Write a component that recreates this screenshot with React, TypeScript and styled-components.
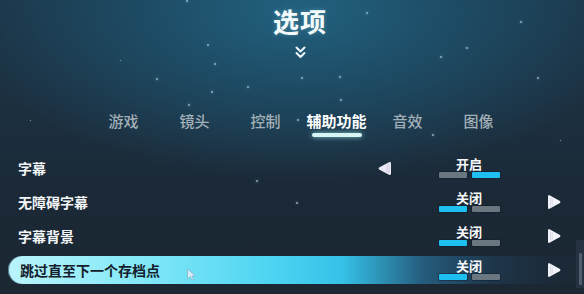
import styled, { createGlobalStyle } from 'styled-components';

const GlobalStyle = createGlobalStyle`
  html, body {
    margin: 0;
    padding: 0;
    background: #1b2835;
  }
  body {
    font-family: 'Noto Sans CJK SC', 'Noto Sans', sans-serif;
  }
`;

const Screen = styled.div`
  position: relative;
  width: 584px;
  height: 294px;
  overflow: hidden;
  display: flex;
  flex-direction: column;
  align-items: stretch;
  background:
    radial-gradient(ellipse 340px 170px at 300px 10px, #22617f 0%, #1e4e68 40%, rgba(28, 52, 70, 0) 100%),
    linear-gradient(180deg, #1c3446 0%, #1c2e3e 45%, #1b2835 70%, #1b2834 100%);
`;

const Star = styled.span<{ $size: number }>`
  position: absolute;
  width: ${p => p.$size}px;
  height: ${p => p.$size}px;
  border-radius: 50%;
  background: rgba(190, 225, 240, 0.7);
  box-shadow: 0 0 3px rgba(170, 220, 240, 0.6);
`;

const Header = styled.header`
  display: flex;
  flex-direction: column;
  align-items: center;
  padding: 6px 0 0 16px;
`;

const Title = styled.h1`
  margin: 0;
  font-size: 26px;
  line-height: 30px;
  font-weight: 700;
  color: #f4fafc;
  letter-spacing: 1px;
  text-shadow: 0 0 4px rgba(140, 210, 230, 0.4);
`;

const Chevron = styled.svg`
  margin-top: 10px;
  display: block;
`;

const Tabs = styled.nav`
  display: flex;
  margin-top: 51px;
  padding-left: 88px;
`;

const Tab = styled.div<{ $active?: boolean }>`
  width: 71px;
  display: flex;
  flex-direction: column;
  align-items: center;
  font-size: 15px;
  line-height: 20px;
  font-weight: ${p => (p.$active ? 700 : 500)};
  color: ${p => (p.$active ? '#ffffff' : '#a3b0b8')};
  white-space: nowrap;
`;

const Underline = styled.span<{ $show?: boolean }>`
  margin-top: 2px;
  width: 50px;
  height: 4px;
  border-radius: 2px;
  background: ${p => (p.$show ? '#d9f5f3' : 'transparent')};
  box-shadow: ${p => (p.$show ? '0 0 5px rgba(160, 235, 235, 0.8)' : 'none')};
`;

const List = styled.div`
  display: flex;
  flex-direction: column;
  gap: 6px;
  margin-top: 17px;
  padding-left: 8px;
`;

const Row = styled.div<{ $focused?: boolean }>`
  display: grid;
  grid-template-columns: 1fr 30px 138px 30px;
  align-items: center;
  height: 28px;
  padding: 0 16px 0 10px;
  border-radius: 14px 0 0 14px;
  background: ${p =>
    p.$focused
      ? 'linear-gradient(90deg, #b9f4fb 0%, #86e9f8 22%, #4fd5f2 45%, #35c2e8 58%, rgba(40, 110, 150, 0.75) 72%, rgba(34, 70, 100, 0.45) 84%, rgba(30, 50, 75, 0.2) 94%, rgba(30, 50, 75, 0) 100%)'
      : 'transparent'};
  box-shadow: ${p => (p.$focused ? 'inset 1px 0 0 rgba(20, 40, 70, 0.6)' : 'none')};
`;

const Label = styled.span<{ $focused?: boolean }>`
  font-size: 14px;
  font-weight: 700;
  color: ${p => (p.$focused ? '#13202c' : '#f3f6f8')};
  padding-left: ${p => (p.$focused ? '2px' : '0')};
  white-space: nowrap;
`;

const ArrowCell = styled.div`
  display: flex;
  justify-content: center;
  align-items: center;
`;

const Value = styled.div`
  display: flex;
  flex-direction: column;
  align-items: center;
  gap: 1px;
  margin-top: -1px;
`;

const ValueText = styled.span`
  font-size: 13px;
  line-height: 14px;
  font-weight: 700;
  color: #f6f8fa;
`;

const Bars = styled.div`
  display: flex;
  gap: 5px;
`;

const Bar = styled.span<{ $on: boolean }>`
  width: 28px;
  height: 6px;
  border-radius: 1px;
  background: ${p => (p.$on ? '#1ec0f2' : '#6a7680')};
  box-shadow: 0 0 0 1px rgba(15, 30, 45, 0.5);
`;

const Scroll = styled.div`
  position: absolute;
  right: 0;
  top: 240px;
  width: 8px;
  height: 48px;
  background: #263240;
  display: flex;
  justify-content: center;
  padding-top: 13px;
  box-sizing: border-box;
`;

const Thumb = styled.span`
  width: 3px;
  height: 32px;
  background: #51606e;
  border-radius: 1px;
`;

const Cursor = styled.svg`
  position: absolute;
  left: 186px;
  top: 268px;
`;

const stars: [number, number, number][] = [
  [186, 0, 2], [207, 44, 2], [214, 63, 2], [156, 78, 2], [211, 91, 2], [247, 86, 2],
  [301, 77, 2], [339, 76, 2], [340, 99, 2], [366, 12, 2], [440, 56, 2], [466, 47, 2],
  [520, 21, 2], [537, 77, 2], [188, 104, 2], [297, 119, 2], [432, 134, 2], [256, 180, 2],
  [296, 202, 2], [30, 120, 1], [560, 140, 1], [120, 60, 1],
];

const LeftArrow = () => (
  <svg width="16" height="15" viewBox="0 0 16 15">
    <path d="M2.5 6.3 L12 1.2 Q14 0.3 14 2.4 L14 12.6 Q14 14.7 12 13.8 L2.5 8.7 Q0.6 7.5 2.5 6.3 Z" fill="#eceaf6" />
    <path d="M10 3.5 L10 11.5 M12 2.6 L12 12.4" stroke="#c9c6dc" strokeWidth="0.8" />
  </svg>
);

const RightArrow = () => (
  <svg width="17" height="16" viewBox="0 0 17 16">
    <path d="M14.5 6.7 L5 1.4 Q3 0.4 3 2.6 L3 13.4 Q3 15.6 5 14.6 L14.5 9.3 Q16.4 8 14.5 6.7 Z" fill="#f2f4fa" />
    <path d="M5.5 3.5 L5.5 12.5 M7.2 4.3 L7.2 11.7" stroke="#d2d4e6" strokeWidth="0.8" />
  </svg>
);

type Option = { label: string; on: boolean; focused?: boolean };

const options: Option[] = [
  { label: '字幕', on: true },
  { label: '无障碍字幕', on: false },
  { label: '字幕背景', on: false },
  { label: '跳过直至下一个存档点', on: false, focused: true },
];

const tabs = ['游戏', '镜头', '控制', '辅助功能', '音效', '图像'];

export default function App() {
  return (
    <>
      <GlobalStyle />
      <Screen>
        {stars.map(([x, y, s], i) => (
          <Star key={i} $size={s} style={{ left: x, top: y }} />
        ))}
        <Header>
          <Title>选项</Title>
          <Chevron width="11" height="14" viewBox="0 0 11 14">
            <path d="M1.5 1.5 L5.5 5.5 L9.5 1.5 M1.5 7 L5.5 11 L9.5 7" stroke="#eef6fa" strokeWidth="2" fill="none" strokeLinecap="round" strokeLinejoin="round" />
          </Chevron>
        </Header>
        <Tabs>
          {tabs.map(t => (
            <Tab key={t} $active={t === '辅助功能'}>
              {t}
              <Underline $show={t === '辅助功能'} />
            </Tab>
          ))}
        </Tabs>
        <List>
          {options.map(o => (
            <Row key={o.label} $focused={o.focused}>
              <Label $focused={o.focused}>{o.label}</Label>
              <ArrowCell>{o.on && <LeftArrow />}</ArrowCell>
              <Value>
                <ValueText>{o.on ? '开启' : '关闭'}</ValueText>
                <Bars>
                  <Bar $on={!o.on} />
                  <Bar $on={o.on} />
                </Bars>
              </Value>
              <ArrowCell>{!o.on && <RightArrow />}</ArrowCell>
            </Row>
          ))}
        </List>
        <Scroll>
          <Thumb />
        </Scroll>
        <Cursor width="12" height="13" viewBox="0 0 12 13">
          <path d="M1.5 1 L1.5 11 L4.2 8.6 L6 12 L7.6 11.2 L5.9 7.9 L9.5 7.7 Z" fill="#d6ecf6" stroke="#7ab2c8" strokeWidth="0.7" strokeLinejoin="round" />
        </Cursor>
      </Screen>
    </>
  );
}
